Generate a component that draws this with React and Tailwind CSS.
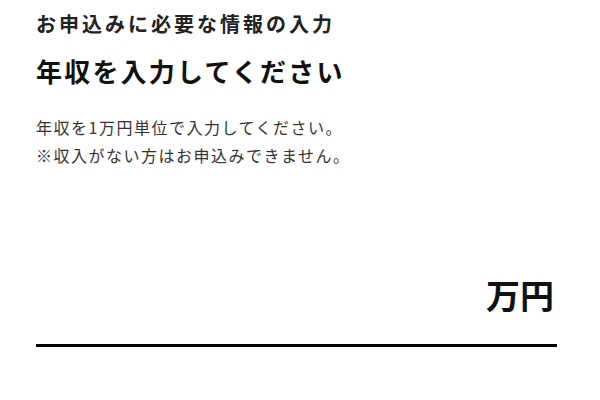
import React from 'react';

export default function App() {
  return (
    <div className="w-[600px] h-[400px] bg-white text-black pl-9 pr-[43px] pt-[9px]" style={{ fontFamily: '"Noto Sans CJK JP", "Noto Sans", sans-serif' }}>
      <div className="text-[20px] leading-[30px] font-bold tracking-[3px] text-[#222]">お申込みに必要な情報の入力</div>
      <h1 className="mt-[14px] text-[26px] leading-[36px] font-bold tracking-[2.2px] text-[#111]">年収を入力してください</h1>
      <div className="mt-[24px] text-[16px] leading-[28px] tracking-[1.5px] text-[#333]">
        <p>年収を1万円単位で入力してください。</p>
        <p>※収入がない方はお申込みできません。</p>
      </div>
      <div className="mt-[101px] flex items-end border-b-[3px] border-black pb-[29px]">
        <input className="flex-1 min-w-0 outline-none bg-transparent text-[30px] font-bold" />
        <span className="text-[34px] leading-[40px] font-bold text-[#111] pr-[3px]">万円</span>
      </div>
    </div>
  );
}
